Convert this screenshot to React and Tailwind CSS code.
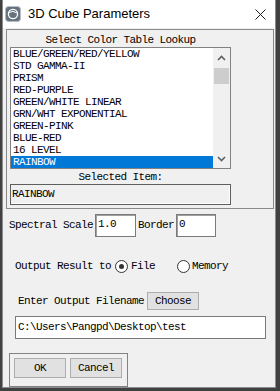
const items = [
  "BLUE/GREEN/RED/YELLOW",
  "STD GAMMA-II",
  "PRISM",
  "RED-PURPLE",
  "GREEN/WHITE LINEAR",
  "GRN/WHT EXPONENTIAL",
  "GREEN-PINK",
  "BLUE-RED",
  "16 LEVEL",
  "RAINBOW",
];

const mono = "font-['Liberation_Mono',monospace] text-[11px] tracking-[-0.6px] text-black";

const Radio = ({ checked }) => (
  <span className="flex h-[13px] w-[13px] items-center justify-center rounded-full border border-[#333] bg-white">
    {checked && <span className="h-[5px] w-[5px] rounded-full bg-[#333]" />}
  </span>
);

const App = () => {
  const selected = "RAINBOW";

  return (
    <div className="h-[391px] w-[280px] bg-[#414141] pl-[2px]">
      <div className={`flex h-[388px] w-[274px] flex-col border-x border-b border-[#8c8c8c] bg-[#f0f0f0] ${mono}`}>
        {/* Title bar */}
        <div className="flex h-[28px] shrink-0 items-center bg-white pl-[2px] pr-[9px]">
          <svg width="16" height="16" viewBox="0 0 16 16" className="mt-[-1px]">
            <rect x="0.5" y="0.5" width="15" height="15" rx="3" fill="#66737f" stroke="#b5bec6" />
            <circle cx="8" cy="8" r="4.6" fill="none" stroke="#fff" strokeWidth="1.3" />
            <path d="M4 6.5 Q8 4 12 7" fill="none" stroke="#fff" strokeWidth="1" />
          </svg>
          <span className="ml-[7px] font-['Liberation_Sans',sans-serif] text-[13px] tracking-normal text-black">
            3D Cube Parameters
          </span>
          <svg width="11" height="11" viewBox="0 0 11 11" className="ml-auto">
            <path d="M0.5 0.5 L10.5 10.5 M10.5 0.5 L0.5 10.5" stroke="#1a1a1a" strokeWidth="1" />
          </svg>
        </div>

        {/* Color table group */}
        <div className="ml-[3px] mt-[1px] h-[181px] w-[268px] border border-[#8a8a8a] pl-[3px] pt-[4px]">
          <div className="h-[13px] w-[221px] text-center leading-[13px]">Select Color Table Lookup</div>
          <div className="flex h-[122px] w-[221px] border border-[#828282] bg-white">
            <div className="flex w-[202px] flex-col">
              {items.map((it) => (
                <div
                  key={it}
                  className={`h-[12px] whitespace-nowrap pl-[2px] leading-[12px] ${
                    it === selected ? "bg-[#0078d7] text-white" : ""
                  }`}
                >
                  {it}
                </div>
              ))}
            </div>
            <div className="flex w-[17px] flex-col items-center bg-[#f0f0f0]">
              <svg width="9" height="6" viewBox="0 0 9 6" className="mt-[7px]">
                <path d="M1 5 L4.5 1.5 L8 5" fill="none" stroke="#606060" strokeWidth="1.6" />
              </svg>
              <div className="mt-[7px] h-[16px] w-[15px] bg-[#cdcdcd]" />
              <svg width="9" height="6" viewBox="0 0 9 6" className="mt-auto mb-[6px]">
                <path d="M1 1 L4.5 4.5 L8 1" fill="none" stroke="#606060" strokeWidth="1.6" />
              </svg>
            </div>
          </div>
          <div className="mt-[1px] h-[14px] w-[221px] text-center leading-[14px]">Selected Item:</div>
          <div className="h-[21px] w-[221px] border border-[#5f5f5f] bg-[#f0f0f0] pl-[1px] pt-[2px] leading-[14px] shadow-[inset_-1px_-1px_0_#ffffff]">
            {selected}
          </div>
        </div>

        {/* Spectral scale / border */}
        <div className="ml-[6px] mt-[5px] flex items-center">
          <span>Spectral Scale</span>
          <div className="ml-[2px] h-[23px] w-[41px] border border-[#7a7a7a] bg-white pl-[2px] pt-[3px] leading-[13px] shadow-[inset_1px_1px_0_#a0a0a0]">
            1.0
          </div>
          <span className="ml-[2px]">Border</span>
          <div className="ml-[2px] h-[23px] w-[40px] border border-[#7a7a7a] bg-white pl-[2px] pt-[3px] leading-[13px] shadow-[inset_1px_1px_0_#a0a0a0]">
            0
          </div>
        </div>

        {/* Output target */}
        <div className="ml-[12px] mt-[22px] flex h-[14px] items-center">
          <span>Output Result to</span>
          <span className="ml-[4px]"><Radio checked /></span>
          <span className="ml-[3px]">File</span>
          <span className="ml-[22px]"><Radio /></span>
          <span className="ml-[2px]">Memory</span>
        </div>

        {/* Filename */}
        <div className="ml-[15px] mt-[19px] flex items-center">
          <span>Enter Output Filename</span>
          <button className="ml-[3px] h-[18px] w-[52px] border border-[#adadad] bg-[#e1e1e1] leading-[14px]">
            Choose
          </button>
        </div>
        <div className="ml-[12px] mt-[6px] h-[23px] w-[251px] border border-[#7a7a7a] bg-white pl-[2px] pt-[3px] leading-[14px]">
          C:\Users\Pangpd\Desktop\test
        </div>

        {/* OK / Cancel */}
        <div className="ml-[6px] mt-[14px] flex h-[34px] w-[119px] gap-[4px] border border-[#828282] pl-[4px] pt-[4px]">
          <button className="h-[20px] w-[52px] border border-[#adadad] bg-[#e1e1e1] leading-[14px]">OK</button>
          <button className="h-[20px] w-[52px] border border-[#adadad] bg-[#e1e1e1] leading-[14px]">Cancel</button>
        </div>
      </div>
    </div>
  );
};

export default App;
